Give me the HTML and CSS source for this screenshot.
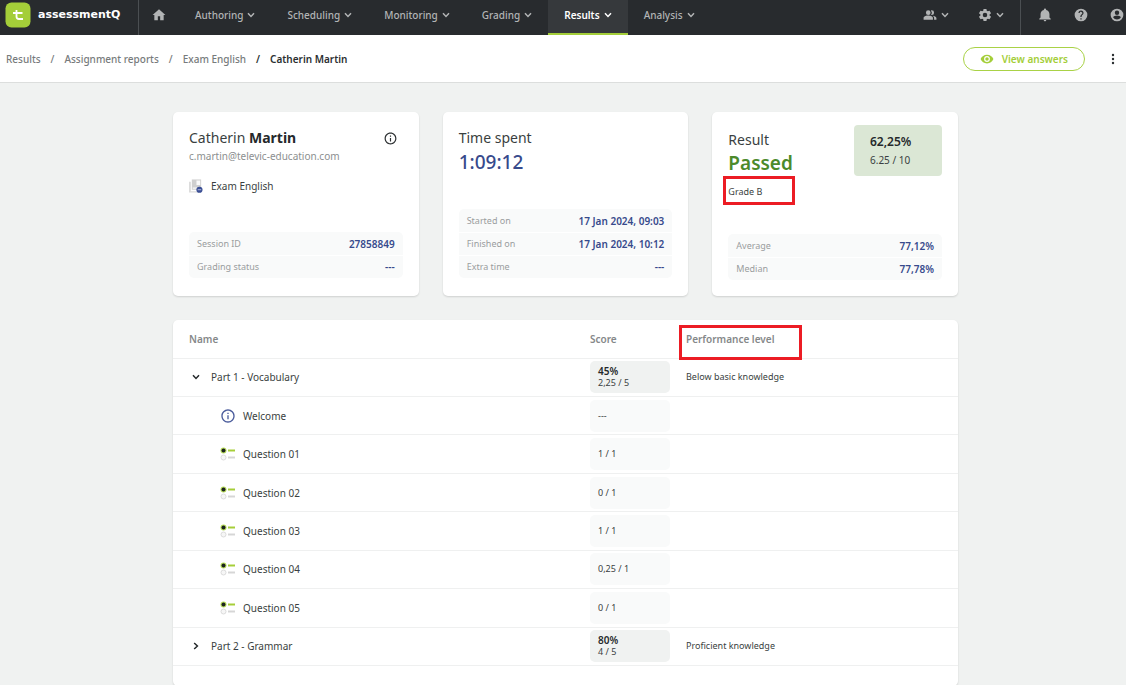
FILE: index.html
```html
<!DOCTYPE html>
<html lang="en">
<head>
<meta charset="utf-8">
<meta name="viewport" content="width=device-width, initial-scale=1">
<title>assessmentQ - Catherin Martin</title>
<link rel="stylesheet" href="styles.css">
</head>
<body>
<svg class="sprite" aria-hidden="true">
  <symbol id="chevron" viewBox="0 0 8 6"><path d="M1 1.2 4 4.4 7 1.2" fill="none" stroke="currentColor" stroke-width="1.5"/></symbol>
  <symbol id="question" viewBox="0 0 16 16">
    <circle cx="3.5" cy="4.500" r="3" fill="#b9dd5c"/><circle cx="3.5" cy="4.500" r="2" fill="#1d2420"/>
    <path d="M8 4.500h7" stroke="#a6ce39" stroke-width="2"/>
    <circle cx="3.5" cy="11.500" r="2.500" fill="#f6f6f6" stroke="#dcdcdc"/>
    <path d="M8 11.500h7" stroke="#d6d6d6" stroke-width="2"/>
  </symbol>
  <symbol id="info" viewBox="0 0 24 24"><path fill="currentColor" d="M11 7h2v2h-2zm0 4h2v6h-2zm1-9C6.480 2 2 6.480 2 12s4.480 10 10 10 10-4.480 10-10S17.520 2 12 2zm0 18c-4.410 0-8-3.590-8-8s3.590-8 8-8 8 3.590 8 8-3.590 8-8 8z"/></symbol>
</svg>

<header class="topbar">
  <a class="brand" href="#">
    <svg class="brand-mark" viewBox="0 0 26 26" aria-hidden="true">
      <rect x="0.500" y="0.500" width="25" height="25" rx="6" fill="#a4ce39"/>
      <path d="M11.500 8v6.500q0 2.500 2.500 2.500h4M8 11h9.500" fill="none" stroke="#fff" stroke-width="1.800"/>
    </svg>
    <span>assessmentQ</span>
  </a>
  <nav class="nav" aria-label="Main">
    <a class="nav-home" href="#" aria-label="Home"><svg viewBox="0 0 24 24"><path fill="currentColor" d="M10 21v-7h4v7h6v-9h3L12 2 1 12h3v9z"/></svg></a>
    <button class="nav-item">Authoring <svg class="chev"><use href="#chevron"/></svg></button>
    <button class="nav-item">Scheduling <svg class="chev"><use href="#chevron"/></svg></button>
    <button class="nav-item">Monitoring <svg class="chev"><use href="#chevron"/></svg></button>
    <button class="nav-item">Grading <svg class="chev"><use href="#chevron"/></svg></button>
    <button class="nav-item active">Results <svg class="chev"><use href="#chevron"/></svg></button>
    <button class="nav-item">Analysis <svg class="chev"><use href="#chevron"/></svg></button>
  </nav>
  <div class="tools">
    <button class="tool" aria-label="Users"><svg class="glyph" viewBox="0 0 24 24"><path fill="currentColor" d="M16.670 13.130C18.040 14.060 19 15.320 19 17v3h4v-3c0-2.180-3.570-3.470-6.330-3.870zM9 12a4 4 0 1 0 0-8 4 4 0 0 0 0 8zM15 12a4 4 0 1 0 0-8c-.47 0-.91.100-1.330.240a5.980 5.980 0 0 1 0 7.520c.420.140.860.240 1.330.240zM9 13c-2.670 0-8 1.340-8 4v3h16v-3c0-2.660-5.330-4-8-4z"/></svg><svg class="chev"><use href="#chevron"/></svg></button>
    <button class="tool" aria-label="Settings"><svg class="glyph" viewBox="1 1 22 22"><path fill="currentColor" d="M19.140 12.940c.040-.3.060-.610.060-.940 0-.320-.020-.640-.070-.940l2.030-1.580a.49.49 0 0 0 .12-.610l-1.920-3.320a.488.488 0 0 0-.590-.220l-2.390.960c-.5-.380-1.030-.7-1.620-.940l-.360-2.540a.484.484 0 0 0-.480-.410h-3.840c-.240 0-.430.170-.470.410l-.360 2.540c-.590.240-1.130.570-1.620.940l-2.390-.960c-.220-.080-.470 0-.590.220L2.740 8.870c-.120.210-.080.470.120.610l2.030 1.580c-.050.3-.090.630-.090.940s.020.640.070.940l-2.030 1.580a.49.49 0 0 0-.12.610l1.920 3.320c.120.220.370.290.590.220l2.390-.960c.5.380 1.030.7 1.620.940l.360 2.540c.050.240.240.410.480.410h3.840c.240 0 .440-.170.470-.410l.360-2.540c.590-.240 1.130-.560 1.620-.940l2.390.960c.220.080.470 0 .590-.220l1.920-3.320c.120-.220.070-.470-.120-.610zM12 15.600A3.600 3.600 0 1 1 12 8.400a3.600 3.600 0 0 1 0 7.200z"/></svg><svg class="chev"><use href="#chevron"/></svg></button>
  </div>
  <div class="account">
    <button aria-label="Notifications"><svg class="glyph" viewBox="1 1 22 22"><path fill="currentColor" d="M12 22c1.100 0 2-.9 2-2h-4c0 1.100.9 2 2 2zm7-6v-5c0-3.500-2-6-5.200-6.700V3.500a1.800 1.800 0 0 0-3.600 0v.8C7 5 5 7.500 5 11v5l-2 2v1h18v-1z"/></svg></button>
    <button aria-label="Help"><svg class="glyph" viewBox="1 1 22 22"><path fill="currentColor" d="M12 2a10 10 0 1 0 0 20 10 10 0 0 0 0-20zm1 17h-2v-2h2zm2.070-7.750-.9.920C13.450 12.900 13 13.500 13 15h-2v-.5c0-1.100.450-2.100 1.170-2.830l1.240-1.260A2 2 0 1 0 10 9H8a4 4 0 0 1 8 0c0 .880-.360 1.680-.930 2.250z"/></svg></button>
    <button aria-label="Account"><svg class="glyph" viewBox="1 1 22 22"><path fill="currentColor" d="M12 2a10 10 0 1 0 0 20 10 10 0 0 0 0-20zm0 3a3.500 3.500 0 1 1 0 7 3.500 3.500 0 0 1 0-7zm0 14.200a7.200 7.200 0 0 1-6-3.220c.030-1.990 4-3.080 6-3.080s5.970 1.090 6 3.080a7.200 7.200 0 0 1-6 3.220z"/></svg></button>
  </div>
</header>

<div class="subbar">
  <nav class="crumbs" aria-label="Breadcrumb">
    <a href="#">Results</a><span>/</span>
    <a href="#">Assignment reports</a><span>/</span>
    <a href="#">Exam English</a><span class="here">/</span>
    <span class="here" aria-current="page">Catherin Martin</span>
  </nav>
  <button class="view-answers"><svg viewBox="0 0 24 24" aria-hidden="true"><path fill="currentColor" d="M12 4.500C7 4.500 2.730 7.610 1 12c1.730 4.390 6 7.500 11 7.500s9.270-3.110 11-7.500c-1.730-4.390-6-7.500-11-7.500zM12 17a5 5 0 1 1 0-10 5 5 0 0 1 0 10zm0-8a3 3 0 1 0 0 6 3 3 0 0 0 0-6z"/></svg>View answers</button>
  <button class="more" aria-label="More"><svg viewBox="0 0 4 12"><circle cx="2" cy="2" r="1.200"/><circle cx="2" cy="6" r="1.200"/><circle cx="2" cy="10" r="1.200"/></svg></button>
</div>

<main class="page">
  <section class="cards">
    <article class="card">
      <div class="card-head">
        <h2 class="title">Catherin <b>Martin</b></h2>
        <button class="info-btn" aria-label="Details"><svg viewBox="1 1 22 22"><use href="#info" width="24" height="24"/></svg></button>
      </div>
      <p class="email">c.martin@televic-education.com</p>
      <p class="exam">
        <svg viewBox="0 0 15 15" aria-hidden="true"><path d="M0 3h2v10h9v1.500H0z" fill="#dcdcdc"/><path d="M3 0.500h10v11H3z" fill="#cfcfcf"/><path d="M8 1.500h4v5H8zM4 9h6v1.500H4z" fill="#fafafa"/><circle cx="11.200" cy="11.500" r="3.300" fill="#3b4f94"/><path d="M9.300 11.500h3.800" stroke="#b6c0e4" stroke-width="1"/></svg>
        Exam English
      </p>
      <dl class="facts">
        <div><dt>Session ID</dt><dd>27858849</dd></div>
        <div><dt>Grading status</dt><dd>---</dd></div>
      </dl>
    </article>
    <article class="card">
      <h2 class="title">Time spent</h2>
      <p class="big time">1:09:12</p>
      <dl class="facts">
        <div><dt>Started on</dt><dd>17 Jan 2024, 09:03</dd></div>
        <div><dt>Finished on</dt><dd>17 Jan 2024, 10:12</dd></div>
        <div><dt>Extra time</dt><dd>---</dd></div>
      </dl>
    </article>
    <article class="card result">
      <div class="card-head">
        <div>
          <h2 class="title">Result</h2>
          <p class="big passed">Passed</p>
          <p class="grade">Grade B</p>
        </div>
        <div class="total"><b>62,25%</b><span>6.25 / 10</span></div>
      </div>
      <dl class="facts">
        <div><dt>Average</dt><dd>77,12%</dd></div>
        <div><dt>Median</dt><dd>77,78%</dd></div>
      </dl>
    </article>
  </section>

  <section class="panel">
    <table class="scores">
      <colgroup><col><col class="col-score"><col class="col-level"></colgroup>
      <thead><tr><th scope="col">Name</th><th scope="col">Score</th><th scope="col"><span class="level-head">Performance level</span></th></tr></thead>
      <tbody>
        <tr><td><button class="part" aria-expanded="true"><svg class="chev"><use href="#chevron"/></svg>Part 1 - Vocabulary</button></td><td><div class="score sum"><b>45%</b><span>2,25 / 5</span></div></td><td>Below basic knowledge</td></tr>
        <tr><td><div class="item"><svg class="intro"><use href="#info"/></svg>Welcome</div></td><td><div class="score">---</div></td><td></td></tr>
        <tr><td><div class="item"><svg><use href="#question"/></svg>Question 01</div></td><td><div class="score">1 / 1</div></td><td></td></tr>
        <tr><td><div class="item"><svg><use href="#question"/></svg>Question 02</div></td><td><div class="score">0 / 1</div></td><td></td></tr>
        <tr><td><div class="item"><svg><use href="#question"/></svg>Question 03</div></td><td><div class="score">1 / 1</div></td><td></td></tr>
        <tr><td><div class="item"><svg><use href="#question"/></svg>Question 04</div></td><td><div class="score">0,25 / 1</div></td><td></td></tr>
        <tr><td><div class="item"><svg><use href="#question"/></svg>Question 05</div></td><td><div class="score">0 / 1</div></td><td></td></tr>
        <tr><td><button class="part closed" aria-expanded="false"><svg class="chev"><use href="#chevron"/></svg>Part 2 - Grammar</button></td><td><div class="score sum"><b>80%</b><span>4 / 5</span></div></td><td>Proficient knowledge</td></tr>
      </tbody>
    </table>
  </section>
</main>
</body>
</html>
```
FILE: styles.css
```css
*, *::after { box-sizing: border-box; }
body {
  margin: 0;
  min-height: 100vh;
  background: #f0f2f1;
  color: #3a3f41;
  font: 10px/16px "Noto Sans", "Open Sans", sans-serif;
}
h2, p, dl, dd { margin: 0; }
button { margin: 0; padding: 0; border: 0; background: none; color: inherit; font: inherit; cursor: pointer; }
a { color: inherit; text-decoration: none; }
svg { display: block; flex: none; }
.sprite { position: absolute; width: 0; height: 0; }

.topbar { display: flex; height: 35px; background: #282b2e; color: #b2b4b5; }
.brand {
  display: flex; align-items: center; gap: 7px;
  width: 139px; padding: 0 0 6px 5px;
  border-right: 1px solid #4b4f52;
  color: #fff; font: bold 11px/16px "DejaVu Sans", sans-serif;
}
.brand-mark { width: 26px; height: 26px; }
.nav { display: flex; }
.nav-home { display: flex; align-items: center; padding: 0 13px 6px; }
.nav-home svg { width: 14px; height: 14px; }
.nav-item {
  display: flex; align-items: center; gap: 4px;
  padding: 0 16px 4px;
  border-bottom: 2px solid transparent;
  font-weight: 500;
}
.nav-item.active { background: #36393c; border-color: #a4ce39; color: #fff; font-weight: 600; }
.chev { width: 8px; height: 6px; }
.glyph { width: 14px; height: 14px; }
.tools { display: flex; gap: 29px; margin-left: auto; padding: 0 16px 6px 0; }
.tool { display: flex; align-items: center; gap: 4px; }
.account { display: flex; align-items: center; gap: 22px; padding: 0 2px 6px 17px; border-left: 1px solid #4b4f52; }

.subbar { display: flex; align-items: center; height: 48px; padding: 0 11px 0 6px; background: #fff; border-bottom: 1px solid #dcdedd; }
.crumbs { display: flex; gap: 10px; margin-right: auto; color: #777b7c; font-weight: 500; }
.crumbs .here { color: #2b2f31; font-weight: 600; }
.view-answers {
  display: flex; align-items: center; gap: 8px;
  height: 24px; padding: 0 16px; margin-right: 26px;
  border: 1px solid #a9d246; border-radius: 12px;
  color: #a4ce39; font-weight: 600;
}
.view-answers svg { width: 14px; height: 14px; }
.more svg { width: 4px; height: 12px; fill: #2b2f31; }

.page { padding: 29px 168px 0 173px; }
.cards { display: grid; grid-template-columns: repeat(3, 1fr); gap: 24px; }
.card {
  display: flex; flex-direction: column;
  min-height: 184px; padding: 16px 16px 18px;
  background: #fff; border-radius: 5px;
  box-shadow: 0 1px 2px rgba(0, 0, 0, 0.14);
}
.card-head { display: flex; justify-content: space-between; }
.title { font-size: 14px; line-height: 20px; font-weight: 400; }
.title b { color: #25292b; }
.info-btn { align-self: center; padding-right: 6px; color: #2b2f31; }
.info-btn svg { width: 13px; height: 13px; }
.email { color: #8c8f90; }
.exam { display: flex; align-items: center; gap: 8px; margin-top: 14px; }
.exam svg { width: 14px; height: 14px; }
.big { font-size: 19px; line-height: 28px; font-weight: 500; }
.time { color: #374a8c; }
.passed { color: #4c8a2b; line-height: 26px; font-weight: 600; }
.facts { margin-top: auto; border-radius: 5px; background: #f9fafa; }
.facts div { display: flex; align-items: center; justify-content: space-between; height: 23px; padding: 0 8px; }
.facts div + div { border-top: 1px solid #fff; }
.facts dt { color: #9a9d9e; font-size: 9px; }
.facts dd { color: #374a8c; font-weight: 600; }
.card.result { padding-bottom: 16px; }
.result .title { padding-top: 2px; }
.grade { position: relative; margin-top: 8px; font-size: 9px; line-height: 16px; }
.grade::after { content: ""; position: absolute; left: -5px; top: -8px; width: 72px; height: 29px; border: 3px solid #ec1c24; }
.total {
  display: flex; flex-direction: column; justify-content: center; gap: 2px;
  width: 88px; height: 51px; padding-left: 16px; margin-top: -3px;
  border-radius: 4px; background: #dbe7d5;
}
.total b { font-weight: 600; color: #25292b; font-size: 12px; }

.panel { margin-top: 24px; padding-bottom: 20px; background: #fff; border-radius: 5px; box-shadow: 0 1px 2px rgba(0, 0, 0, 0.14); }
.scores { width: 100%; height: 346px; table-layout: fixed; border-collapse: collapse; }
.col-score { width: 96px; }
.col-level { width: 288px; }
.scores th, .scores td { padding: 0 0 0 16px; text-align: left; border-bottom: 1px solid #eff0f0; }
.scores th { height: 38px; color: #858889; font-weight: 600; }
.scores td { font-size: 9px; }
.level-head { position: relative; }
.level-head::after { content: ""; position: absolute; left: -7px; top: -7px; width: 123px; height: 35px; border: 3px solid #ec1c24; }
.part { display: flex; align-items: center; gap: 11px; padding-left: 3px; font-size: 10px; }
.part .chev { color: #25292b; }
.part.closed .chev { transform: rotate(-90deg); }
.item { display: flex; align-items: center; gap: 7px; padding-left: 31px; font-size: 10px; }
.item svg { width: 16px; height: 16px; }
.item .intro { color: #4b5c9c; }
.score { display: flex; flex-direction: column; justify-content: center; height: 32px; padding-left: 8px; border-radius: 5px; background: #f9fafa; line-height: 12px; }
.score.sum { background: #f0f2f1; }
.score b { font-size: 10px; font-weight: 600; color: #25292b; }
```
